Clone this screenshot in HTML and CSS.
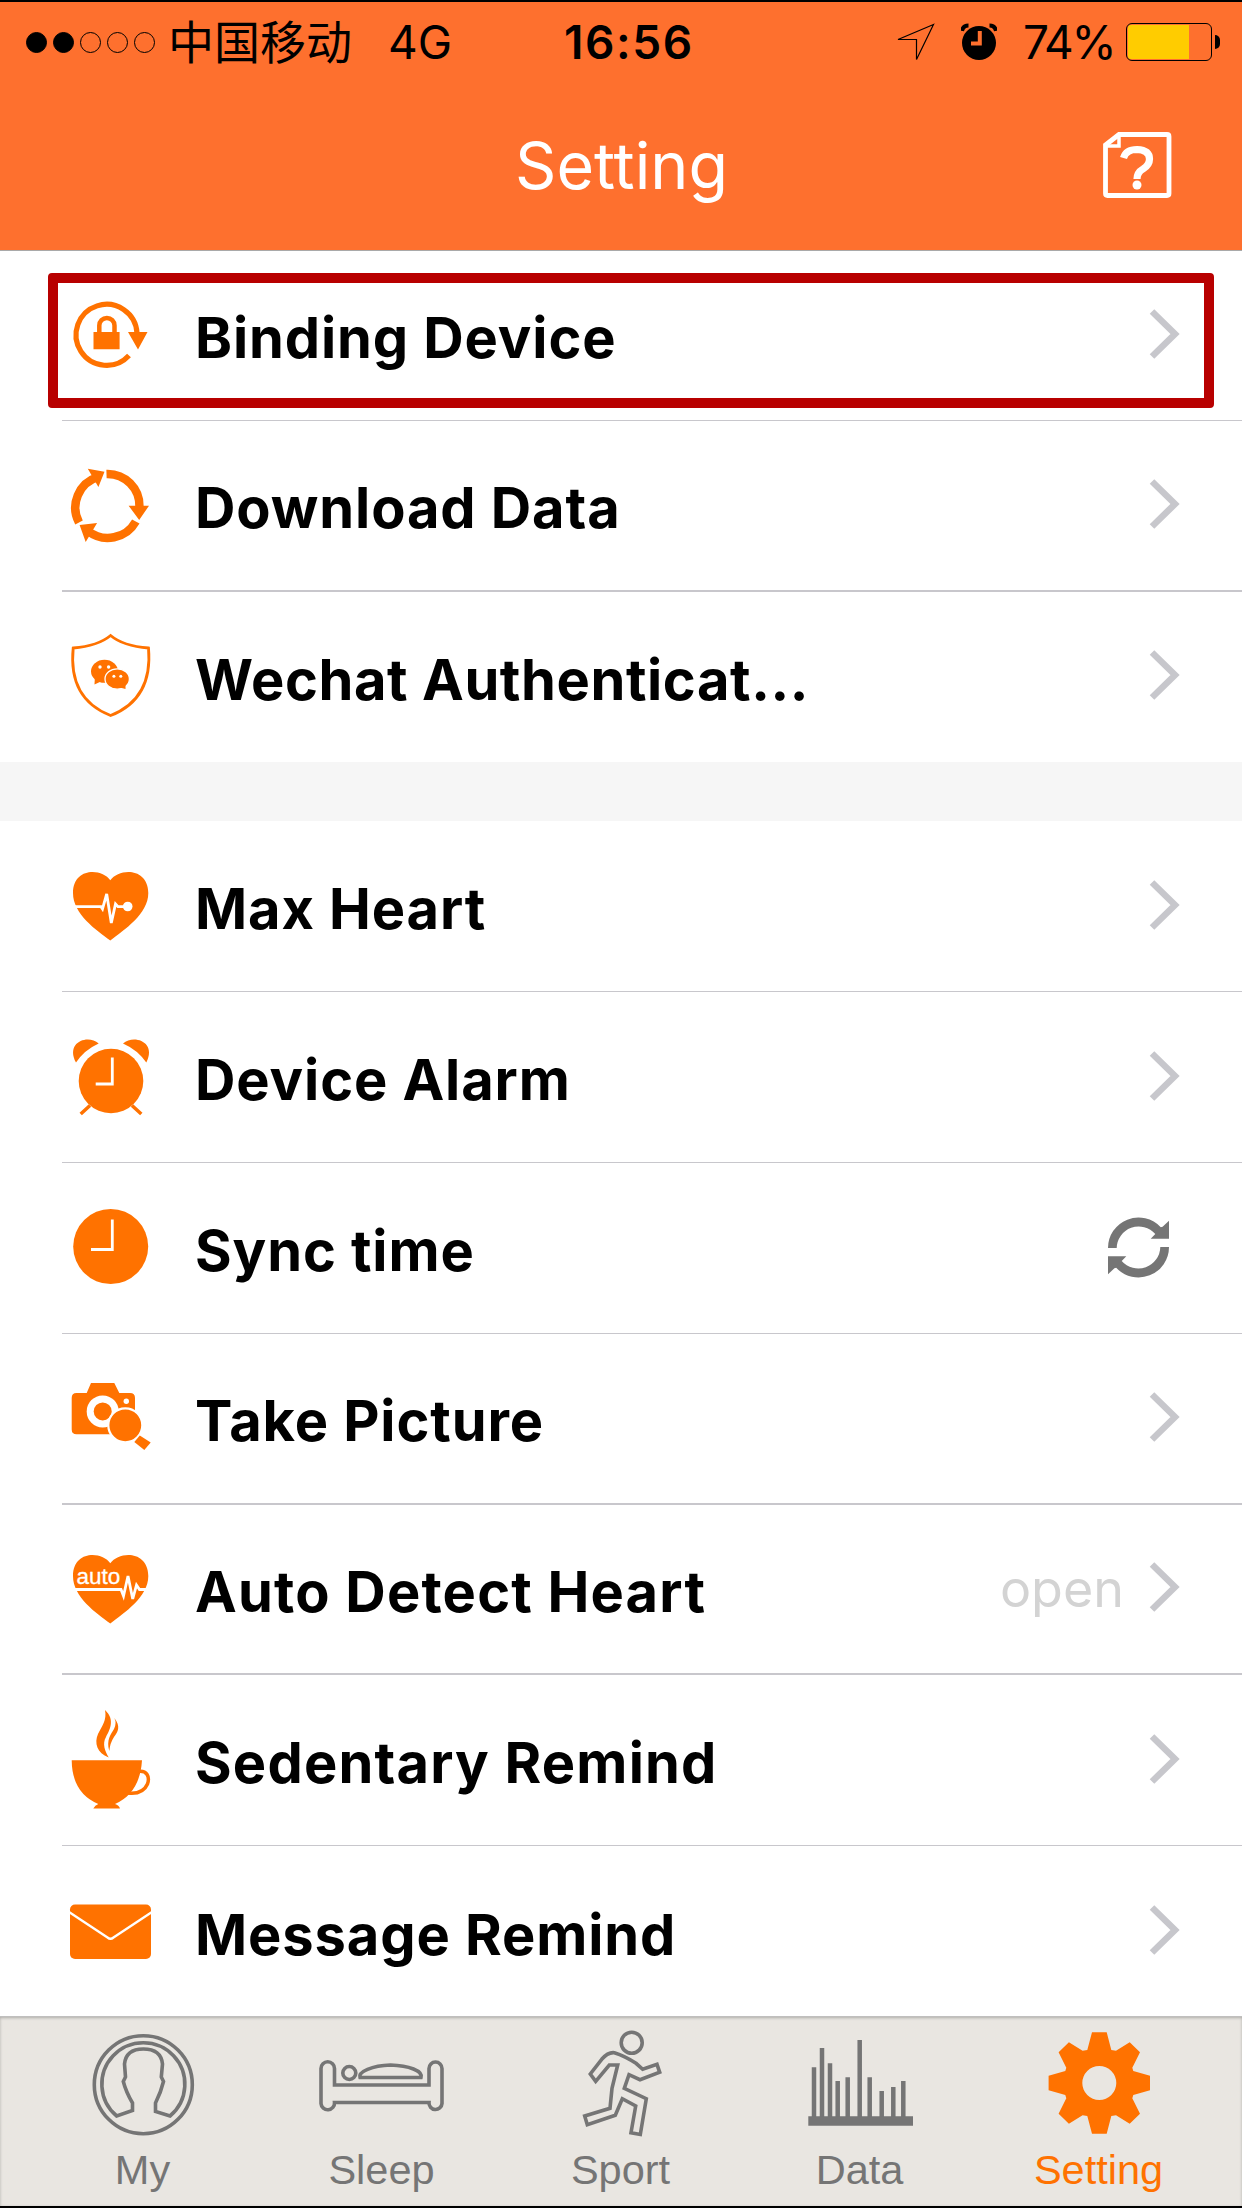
FILE: index.html
```html
<!DOCTYPE html>
<html lang="en">
<head>
    <meta charset="UTF-8">
    <meta name="viewport" content="width=device-width, initial-scale=1.0">
    <title>Setting</title>
    <link rel="stylesheet" href="styles.css">
</head>
<body>

    <div class="header">
        <div class="status-bar">
            <div class="signal">
                <span class="dot full"></span>
                <span class="dot full"></span>
                <span class="dot"></span>
                <span class="dot"></span>
                <span class="dot"></span>
            </div>
            <span class="carrier">中国移动</span>
            <span class="network">4G</span>
            <span class="time">16:56</span>
            <div class="status-right">
                <svg class="location" width="40" height="42" viewBox="0 0 40 42">
                    <path d="M37.500 3.500L2 18.500H20.500V38.500z" fill="none" stroke="#000" stroke-width="1.200"/>
                </svg>
                <svg class="alarm-small" width="36" height="38" viewBox="0 0 36 38">
                    <circle cx="18" cy="20" r="17" fill="#000"/>
                    <path d="M1 8Q2 2.500 7.500 2.500M35 8Q34 2.500 28.500 2.500" fill="none" stroke="#000" stroke-width="4"/>
                    <path d="M18.800 8V20.500H10" fill="none" stroke="#fe702e" stroke-width="4"/>
                </svg>
                <span class="percent">74%</span>
                <div class="battery"><div class="level"></div></div>
                <span class="nub"></span>
            </div>
        </div>
        <div class="title-bar">
            <h1>Setting</h1>
            <svg class="help" width="70" height="68" viewBox="0 0 70 68">
                <path d="M3.500 14V62.500Q3.500 64.500 5.500 64.500H65Q67 64.500 67 62.500V5.500Q67 3.500 65 3.500H17z" fill="none" stroke="#fff" stroke-width="4.800"/>
                <path d="M17 4V15H4" fill="none" stroke="#fff" stroke-width="3.500"/>
                <path d="M21.500 27Q24 18.500 35 18.500Q47.500 19 47.500 28Q47.500 34 41 38Q35 41.500 35 48" fill="none" stroke="#fff" stroke-width="7.200"/>
                <circle cx="35" cy="54" r="4.500" fill="#fff"/>
            </svg>
        </div>
    </div>

    <div class="list">
        <div class="row first selected">
            <svg class="icon" viewBox="0 0 84 100">
                <path class="line" d="M61 70.500A30.500 30.500 0 1 1 69 48" stroke-width="5.200"/>
                <path d="M60 47H79.500L70 64.500zM25.500 47H51.600V64.300H25.500z"/>
                <path class="line" d="M31.300 48V40.500A7.600 7.600 0 0 1 46.500 40.500V48" stroke-width="4.500"/>
            </svg>
            <span class="label">Binding Device</span>
            <svg class="chevron" viewBox="0 0 32 52"><path d="M3 3.500L26 26L3 48.500"/></svg>
        </div>
        <div class="row thick">
            <svg class="icon" viewBox="0 0 84 100">
                <g class="line" stroke-width="8.500">
                    <path d="M38.500 19A32 32 0 0 1 71.500 52"/>
                    <path d="M67.800 66.500A32 32 0 0 1 20 76"/>
                    <path d="M11 67.500A32 32 0 0 1 30 22"/>
                </g>
                <path d="M60.600 50.700H81L71.200 65zM11.600 70L29.100 68L17.700 87zM19.800 13.800L36.500 16.700L30.400 32z"/>
            </svg>
            <span class="label">Download Data</span>
            <svg class="chevron" viewBox="0 0 32 52"><path d="M3 3.500L26 26L3 48.500"/></svg>
        </div>
        <div class="row last">
            <svg class="icon" viewBox="0 0 84 100">
                <path class="line" d="M42.600 8.500Q30 19 5.200 21Q0 72 42.600 88.500Q85 72 80.500 21Q55 19 42.600 8.500z" stroke-width="2.800"/>
                <ellipse cx="36.500" cy="44.300" rx="13.500" ry="11.500"/>
                <path d="M27 49L26.500 57.500L36 53z"/>
                <ellipse cx="49.200" cy="52" rx="12.200" ry="10.200" stroke="#fff" stroke-width="1.300"/>
                <path d="M50 60L57.500 62V55z"/>
                <g fill="#fff">
                    <circle cx="32" cy="40" r="1.700"/>
                    <circle cx="40.600" cy="40" r="1.700"/>
                    <circle cx="45.900" cy="49.300" r="1.500"/>
                    <circle cx="52.800" cy="49.300" r="1.500"/>
                </g>
            </svg>
            <span class="label long">Wechat Authenticat...</span>
            <svg class="chevron" viewBox="0 0 32 52"><path d="M3 3.500L26 26L3 48.500"/></svg>
        </div>
    </div>

    <div class="list">
        <div class="row">
            <svg class="icon" viewBox="0 0 84 100">
                <path d="M42.300 24.200C34 12 5 11 5 37C5 58 28 74 42.300 84.500C56 74 80.300 58 80.300 37C80 11 51 12 42.300 24.200z"/>
                <path class="pulse" d="M6 50.700H33L34.500 53L38.700 38L43.300 67L47.500 48L50 50.700H57"/>
                <circle cx="59.700" cy="50.500" r="4.800" fill="#fff"/>
            </svg>
            <span class="label">Max Heart</span>
            <svg class="chevron" viewBox="0 0 32 52"><path d="M3 3.500L26 26L3 48.500"/></svg>
        </div>
        <div class="row">
            <svg class="icon" viewBox="0 0 84 100">
                <circle cx="43" cy="54" r="32.300"/>
                <path d="M8 35.600C-3 15 20 7 30.700 16.400Q16 23 8 35.600zM78.300 35.600C89 15 66 7 55 16.400Q70 23 78.300 35.600z"/>
                <path class="line" d="M22 78.500L12.700 87M64 78.500L73.300 87" stroke-width="3.500"/>
                <path d="M44.300 30.500V57H27.700" fill="none" stroke="#fff" stroke-width="2.800"/>
            </svg>
            <span class="label">Device Alarm</span>
            <svg class="chevron" viewBox="0 0 32 52"><path d="M3 3.500L26 26L3 48.500"/></svg>
        </div>
        <div class="row">
            <svg class="icon" viewBox="0 0 84 100">
                <circle cx="42.700" cy="48.500" r="37.500"/>
                <path d="M44.300 21.500V51.500H23" fill="none" stroke="#fff" stroke-width="2.800"/>
            </svg>
            <span class="label">Sync time</span>
            <svg class="sync" width="61" height="61" viewBox="0 0 61 61">
                <path id="half" d="M0 31A30.500 30.500 0 0 1 52.800 10.200L54.600 9.700L61 3.700V21.700H42.700L47.300 17A22 22 0 0 0 8.700 31z"/>
                <use href="#half" transform="rotate(180 30.500 30.500)"/>
            </svg>
        </div>
        <div class="row thick">
            <svg class="icon" viewBox="0 0 84 100">
                <path d="M8.500 25H18.700L23 15H46.300L51.300 25H62Q67 25 67 30V66.300H8.500Q3.700 66.300 3.700 61.500V30Q3.700 25 8.500 25z"/>
                <circle cx="34.700" cy="43.400" r="16" fill="#fff"/>
                <circle cx="34.700" cy="43.400" r="9"/>
                <circle cx="58.300" cy="33.200" r="2.700" fill="#fff"/>
                <circle cx="57.300" cy="57.300" r="17" stroke="#fff" stroke-width="2.200"/>
                <path d="M66.300 74L71.800 67.500L82.700 74.500L76.300 82z"/>
            </svg>
            <span class="label">Take Picture</span>
            <svg class="chevron" viewBox="0 0 32 52"><path d="M3 3.500L26 26L3 48.500"/></svg>
        </div>
        <div class="row thick">
            <svg class="icon" viewBox="0 0 84 100">
                <path d="M42.300 24.200C34 12 5 11 5 37C5 58 28 74 42.300 84.500C56 74 80.300 58 80.300 37C80 11 51 12 42.300 24.200z"/>
                <text class="auto-text" x="8.500" y="44.500">auto</text>
                <path class="pulse" d="M6 50.500H53L55.500 57L60 37L64.700 60L68.500 46L71.500 50.500H80"/>
            </svg>
            <span class="label wide">Auto Detect Heart</span>
            <span class="value">open</span>
            <svg class="chevron" viewBox="0 0 32 52"><path d="M3 3.500L26 26L3 48.500"/></svg>
        </div>
        <div class="row">
            <svg class="icon" viewBox="0 0 84 100">
                <path d="M37 0C48 10 41 21 38 27C34 34 37 41 40.700 47.500C29 43 26 33 30 24C34 16 39 10 37 0z"/>
                <path d="M46.300 8C53 16 50 22 46 27Q42 33 41.300 41C38 30 43 24 46 19Q49 13 46.300 8z"/>
                <path d="M3.700 50.300H74Q72 83 47 94Q51 95 52 98.500H25.300Q27 95 30.300 94Q4 83 3.700 50.300z"/>
                <path class="line" d="M70 61.500C79 60 82 67 79.500 74C76 82 69 84 60 83" stroke-width="3.500"/>
            </svg>
            <span class="label wide">Sedentary Remind</span>
            <svg class="chevron" viewBox="0 0 32 52"><path d="M3 3.500L26 26L3 48.500"/></svg>
        </div>
        <div class="row last">
            <svg class="icon" viewBox="0 0 84 100">
                <rect x="2" y="22.500" width="81" height="54.500" rx="5"/>
                <path d="M1 30L39.500 55.500Q42.500 58 45.500 55.500L84 30" fill="none" stroke="#fff" stroke-width="2.300"/>
            </svg>
            <span class="label">Message Remind</span>
            <svg class="chevron" viewBox="0 0 32 52"><path d="M3 3.500L26 26L3 48.500"/></svg>
        </div>
    </div>

    <div class="tab-bar">
        <div class="tab">
            <svg viewBox="0 0 110 110">
                <circle cx="55.300" cy="54.700" r="49"/>
                <path d="M28.700 86A41.500 41.500 0 1 1 82 86L67.500 81.500V73Q73 62 75.500 51.500L73.300 47L74.500 34Q73 19 55.300 19Q38 19 36.500 34L37.500 47L35.300 51.500Q38 62 44.500 73V80.500z"/>
            </svg>
            <span>My</span>
        </div>
        <div class="tab">
            <svg class="wide" viewBox="0 0 130 110">
                <path d="M4 38.500a6.750 6.750 0 0 1 13.500 0V55H112V38.500a6.500 6.500 0 0 1 13 0V73.500a6.500 6.500 0 0 1-13-1H17.500a6.500 6.500 0 0 1-13.500 1z"/>
                <circle cx="32.300" cy="43" r="6.500"/>
                <path d="M43 47.500H104C106 41 92 35.500 73.500 35C55 35.500 41 42 43 47.500z"/>
            </svg>
            <span>Sleep</span>
        </div>
        <div class="tab">
            <svg viewBox="0 0 110 110">
                <circle cx="65.700" cy="12.700" r="10.500"/>
                <path d="M48.300 22.700Q59 26 70 33.300L76.700 39.300L91 34.300L93.700 42.300L74 49.700L63 44.700L58.300 58.300L80.300 68.700L74.300 104.500L65 102.700L69.700 76L56.300 68.700L49.300 85.300L21.300 94.700L18.700 86L44 78.300L46 58.300L51.700 35H43.300L29.700 51.300L24.300 44L35.700 29.300Q42 22 48.300 22.700z"/>
            </svg>
            <span>Sport</span>
        </div>
        <div class="tab">
            <svg viewBox="0 0 110 110">
                <path d="M9 37.300V88M17 18V88M25 33.300V88M32.700 51V88M42.700 47.300V88M54.700 10V88M64.700 47.300V88M76.700 61V88M88.300 57V88M98.300 51V88" stroke-width="4.500"/>
                <path d="M3.300 91H108" stroke-width="9.500"/>
            </svg>
            <span>Data</span>
        </div>
        <div class="tab active">
            <svg viewBox="0 0 110 110">
                <path fill-rule="evenodd" d="M48 2.300H62.700L67.300 20L72 20.700L85.700 12.300L96 22.300L88.300 37.700L89.300 41L106 45.700V60.300L89.300 65L88.300 68.300L96 83.700L85.700 93.700L72 85.300L67.300 86L62.700 103.700H48L43.300 86L38.600 85.300L24.900 93.700L14.600 83.700L22.300 68.300L21.300 65L4.600 60.300V45.700L21.300 41L22.300 37.700L14.600 22.300L24.900 12.300L38.600 20.700L43.300 20zM38.300 53a17 17 0 1 0 34 0a17 17 0 1 0-34 0z"/>
            </svg>
            <span>Setting</span>
        </div>
    </div>

</body>
</html>
```

FILE: styles.css
```css
* {
    box-sizing: border-box;
}

body {
    font-family: Inter, "Noto Sans CJK SC", sans-serif;
    background-color: #f6f6f6;
    margin: 0;
    width: 1242px;
    height: 2208px;
    display: flex;
    flex-direction: column;
    border-top: 2px solid #000;
    border-bottom: 2px solid #000;
    overflow: hidden;
}

svg {
    display: block;
    flex-shrink: 0;
}

.header {
    height: 249px;
    background-color: #fe702e;
    border-bottom: 1px solid #a9a9a9;
}

.status-bar {
    height: 80px;
    display: flex;
    align-items: center;
    padding-left: 26px;
    font-size: 46px;
    line-height: 80px;
    color: #000;
}

.signal {
    display: flex;
    gap: 6px;
}

.dot {
    width: 21px;
    height: 21px;
    border: 1px solid #000;
    border-radius: 50%;
}

.dot.full {
    background-color: #000;
}

.carrier {
    width: 220px;
    margin-left: 13px;
    padding-bottom: 6px;
    font-family: "Noto Sans CJK SC", sans-serif;
}

.network {
    width: 176px;
}

.time {
    font-weight: 600;
    letter-spacing: 1.600px;
}

.status-right {
    display: flex;
    align-items: center;
    margin-left: auto;
    padding-right: 22px;
}

.alarm-small {
    margin-left: 25px;
}

.percent {
    width: 91px;
    margin-left: 26px;
    letter-spacing: -2.300px;
}

.battery {
    width: 86px;
    height: 38px;
    margin-left: 12px;
    padding: 1px;
    border: 1.5px solid #000;
    border-radius: 6px;
}

.level {
    width: 61px;
    height: 100%;
    background-color: #ffcc00;
    border-radius: 3px 0 0 3px;
}

.nub {
    width: 5px;
    height: 14px;
    margin-left: 3px;
    background-color: #000;
    border-radius: 0 5px 5px 0;
}

.title-bar {
    height: 168px;
    display: grid;
    grid-template-columns: 1fr auto 1fr;
    align-items: start;
}

h1 {
    grid-column: 2;
    margin: 44px 0 0 1px;
    font-size: 64.500px;
    line-height: 80px;
    font-weight: 400;
    color: white;
}

.help {
    justify-self: end;
    margin: 49px 70px 0 0;
}

.list {
    background-color: #fff;
    margin-bottom: 59px;
    flex-shrink: 0;
}

.row {
    position: relative;
    height: 170.800px;
    margin-left: 62px;
    padding-right: 61px;
    display: flex;
    align-items: center;
    border-bottom: 1px solid #c8c7cc;
}

.row.first {
    height: 169.800px;
}

.row.thick {
    border-bottom-width: 2px;
}

.row.last {
    border-bottom: none;
}

/* red frame around the highlighted row */
.row.selected::before {
    content: "";
    box-sizing: border-box;
    position: absolute;
    top: 22px;
    left: -14px;
    right: 28px;
    height: 135px;
    border: 10px solid #b80000;
    border-radius: 4px;
}

.icon {
    width: 84px;
    height: 100px;
    margin-left: 6px;
    fill: #ff7200;
    overflow: visible;
}

.line {
    fill: none;
    stroke: #ff7200;
}

.pulse {
    fill: none;
    stroke: #fff;
    stroke-width: 2.800;
}

.auto-text {
    font-family: "Liberation Sans", sans-serif;
    font-size: 22.500px;
    fill: #fff;
    stroke: #fff;
    stroke-width: 0.300;
}

.label {
    flex: 1;
    margin-left: 43px;
    padding-top: 6px;
    font-size: 56px;
    line-height: 70px;
    font-weight: 700;
    letter-spacing: 0.900px;
    white-space: nowrap;
    color: #000;
}

.label.long {
    letter-spacing: 0.600px;
}

.label.wide {
    letter-spacing: 1.200px;
}

.value {
    margin-right: 25px;
    font-size: 52px;
    color: #d3d3d3;
}

.chevron {
    width: 32px;
    height: 52px;
    margin-bottom: 3px;
    fill: none;
    stroke: #c7c7cc;
    stroke-width: 6.500;
}

.sync {
    margin-right: 12px;
    fill: #757575;
}

.tab-bar {
    flex: 1;
    margin-top: -59.500px;
    padding: 13px 24px 0 23px;
    display: flex;
    background-color: #e9e6e1;
    border-top: 1px solid #c0bfbe;
    box-shadow: inset 0 1px 3px rgba(0, 0, 0, 0.25);
    z-index: 1;
}

.tab {
    flex: 1;
    display: flex;
    flex-direction: column;
    align-items: center;
    font-family: "Liberation Sans", sans-serif;
    font-size: 41.500px;
    line-height: 60px;
    color: #757575;
}

.tab svg {
    width: 110px;
    height: 110px;
    fill: none;
    stroke: #757575;
    stroke-width: 3.600;
}

.tab svg.wide {
    width: 130px;
}

.tab.active {
    color: #ff7200;
}

.tab.active svg {
    fill: #ff7200;
    stroke: none;
}
```
